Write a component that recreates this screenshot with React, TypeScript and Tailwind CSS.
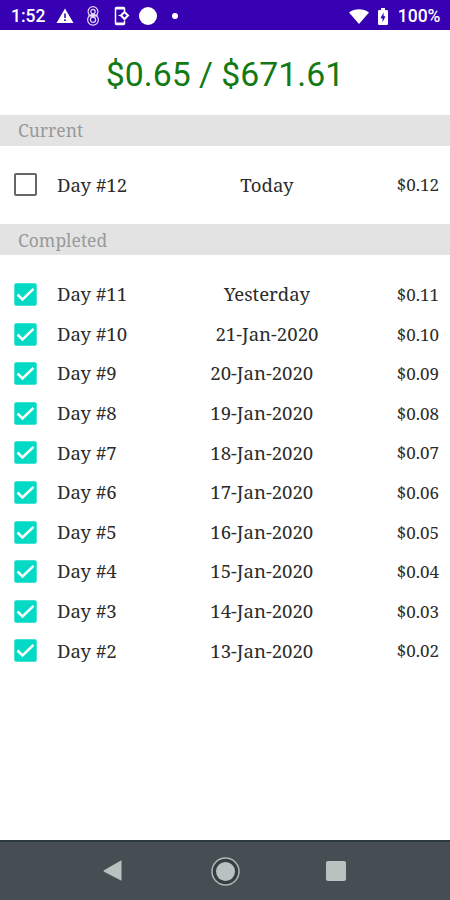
type Entry = { day: string; date: string; price: string };

const current: Entry = { day: "Day #12", date: "Today", price: "$0.12" };

const completed: Entry[] = [
  { day: "Day #11", date: "Yesterday", price: "$0.11" },
  { day: "Day #10", date: "21-Jan-2020", price: "$0.10" },
  { day: "Day #9", date: "20-Jan-2020", price: "$0.09" },
  { day: "Day #8", date: "19-Jan-2020", price: "$0.08" },
  { day: "Day #7", date: "18-Jan-2020", price: "$0.07" },
  { day: "Day #6", date: "17-Jan-2020", price: "$0.06" },
  { day: "Day #5", date: "16-Jan-2020", price: "$0.05" },
  { day: "Day #4", date: "15-Jan-2020", price: "$0.04" },
  { day: "Day #3", date: "14-Jan-2020", price: "$0.03" },
  { day: "Day #2", date: "13-Jan-2020", price: "$0.02" },
];

function StatusBar() {
  return (
    <header className="flex h-[30px] items-center bg-[#3700b3] pt-[2px] pr-[9.500px] pl-[11px] font-['Roboto',sans-serif] text-[17.5px] font-medium text-white">
      <span className="w-[45px] pt-[1px] leading-none">1:52</span>
      <svg className="h-[16px] w-[18px]" viewBox="0 0 18 16" fill="#fff">
        <path d="M9 0.5 17.5 15H0.5Z" />
        <path d="M8.200 5.500h1.600v4.500H8.200zM8.200 11.300h1.600v1.600H8.200z" fill="#3700b3" />
      </svg>
      <svg className="ml-[12px] h-[20px] w-[14px]" viewBox="0 0 14 20" fill="none" stroke="#e4daf6" strokeWidth="1.200">
        <circle cx="7" cy="5.600" r="4.900" />
        <circle cx="7" cy="5.600" r="2.200" />
        <circle cx="7" cy="13.800" r="5.400" />
        <circle cx="7" cy="13.800" r="2.600" />
        <path d="M2.500 9.700h9M7 8v3.500" />
      </svg>
      <svg className="ml-[14px] h-[20px] w-[16px]" viewBox="0 0 16 20" fill="none" stroke="#fff">
        <path d="M10.500 5V2.500a1 1 0 0 0-1-1H2.500a1 1 0 0 0-1 1v15a1 1 0 0 0 1 1h7a1 1 0 0 0 1-1V15" strokeWidth="1.500" />
        <path d="M1.500 2.500h9M1.500 17.500h9" strokeWidth="2" />
        <path d="m10.500 6 3.500 3.500-3.500 3.500L7 9.500Z" strokeWidth="2" />
        <path d="M4.500 9.500H7M10.500 13v1.500" strokeWidth="1.200" />
      </svg>
      <div className="ml-[8.500px] size-[18.500px] rounded-full bg-white" />
      <div className="ml-[15px] size-[6px] rounded-full bg-white" />
      <svg className="ml-auto h-[15px] w-[20px]" viewBox="0 0 20 15" fill="#fff">
        <path d="M0 3.500C5.800-.7 14.200-.7 20 3.500L10 15Z" />
      </svg>
      <svg className="ml-[9px] h-[17px] w-[10px]" viewBox="0 0 10 17">
        <path d="M3 0h4v2h1.800q1.200 0 1.200 1.200v12.600q0 1.200-1.200 1.200H1.200Q0 17 0 15.800V3.200Q0 2 1.200 2H3Z" fill="#fff" />
        <path d="M5.600 4.500 2.500 10.300h2v4l3-6h-1.900z" fill="#3700b3" />
      </svg>
      <span className="ml-[10px] pt-[1px] leading-none">100%</span>
    </header>
  );
}

function SectionTitle({ title }: { title: string }) {
  return (
    <h2 className="flex h-[31px] shrink-0 items-center bg-[#e3e3e3] pt-[1px] pl-[18px] text-[17.5px] text-[#999]">{title}</h2>
  );
}

function Checkbox({ checked }: { checked: boolean }) {
  return checked ? (
    <svg className="size-[23px] shrink-0" viewBox="0 0 23 23">
      <rect x="0.300" y="0.300" width="22.400" height="22.400" rx="1.800" fill="#03dac5" />
      <path d="m3.500 11.500 5 5L19.500 5.800" fill="none" stroke="#fff" strokeWidth="2.500" />
    </svg>
  ) : (
    <div className="size-[23px] shrink-0 rounded-[2px] border-2 border-[#666]" />
  );
}

function Row({ entry, checked }: { entry: Entry; checked: boolean }) {
  return (
    <div className="flex h-[39.600px] items-center pr-[11px] pl-[14px] text-[18.600px] leading-none text-[#2b2b2b]">
      <Checkbox checked={checked} />
      <span className="ml-[20px]">{entry.day}</span>
      <span className="flex-1 pl-[10px] text-center">{entry.date}</span>
      <span className="text-[17px]">{entry.price}</span>
    </div>
  );
}

export default function App() {
  return (
    <div className="flex h-[900px] w-[450px] flex-col overflow-hidden bg-white font-['Noto_Serif','DejaVu_Serif_Condensed','DejaVu_Serif',serif]">
      <StatusBar />
      <h1 className="flex h-[84.500px] items-center justify-center pt-[7px] font-['Roboto',sans-serif] text-[33.800px] text-[#137a13]">
        $0.65 / $671.61
      </h1>
      <SectionTitle title="Current" />
      <div className="pt-[19.700px] pb-[19.300px]">
        <Row entry={current} checked={false} />
      </div>
      <SectionTitle title="Completed" />
      <div className="pt-[19.700px] pb-[19.300px]">
        {completed.map((entry) => (
          <Row key={entry.day} entry={entry} checked />
        ))}
      </div>
      <nav className="mt-auto flex h-[60px] items-center border-t-2 border-[#2b383c] bg-[#464e53] pl-[103px]">
        <svg className="h-[22px] w-[19px]" viewBox="0 0 19 22" fill="#b9c1c1">
          <path d="M18.500 1.200v19.600L1 11.700q-1-.7 0-1.400L17.500.7q1-.4 1 .5Z" />
        </svg>
        <svg className="ml-[89px] size-[29px]" viewBox="0 0 29 29">
          <circle cx="14.500" cy="14.500" r="13.500" fill="#343f42" stroke="#aeb7b7" strokeWidth="1.500" />
          <circle cx="14.500" cy="14.500" r="9.500" fill="#b9c1c1" />
        </svg>
        <div className="ml-[86px] size-[20px] rounded-[2px] bg-[#b9c1c1]" />
      </nav>
    </div>
  );
}
